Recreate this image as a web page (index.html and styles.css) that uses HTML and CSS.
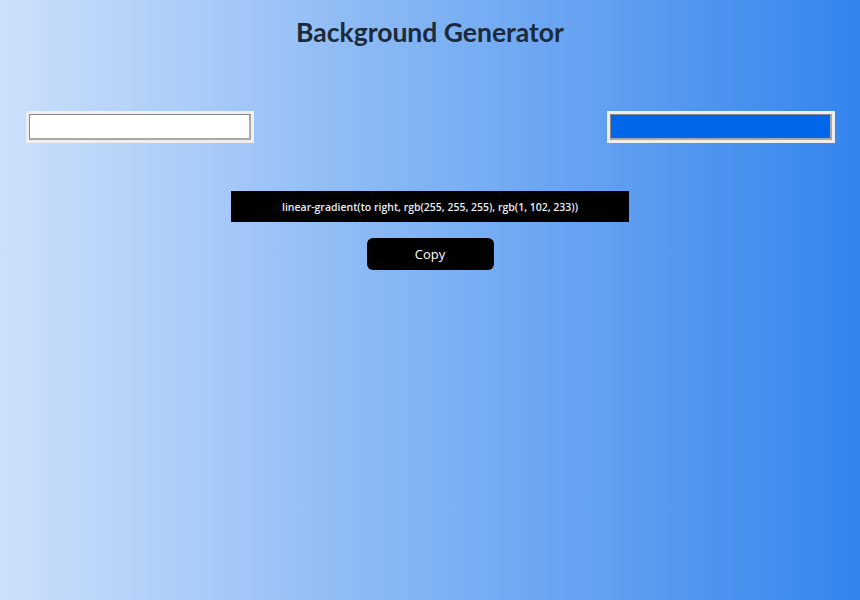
FILE: index.html
```html
<!DOCTYPE html>
<html>
<head>
<meta charset="utf-8">
<link rel="stylesheet" href="styles.css">
</head>
<body>
<h1 class="title">Background Generator</h1>
<div class="pickers">
  <input class="color" type="color" value="#ffffff">
  <input class="color" type="color" value="#0166e9">
</div>
<div class="output">linear-gradient(to right, rgb(255, 255, 255), rgb(1, 102, 233))</div>
<div class="actions"><button class="copy">Copy</button></div>
</body>
</html>
```
FILE: styles.css
```css
html {
  height: 100%;
}
body {
  margin: 0;
  min-height: 100%;
  background: linear-gradient(to right, #ffffff -33%, rgb(1, 102, 233) 133%);
  font-family: "Open Sans", "DejaVu Sans", sans-serif;
  display: flex;
  flex-direction: column;
  align-items: center;
}
.title {
  margin: 16px 0 0;
  font-family: Lato, "Open Sans", sans-serif;
  font-size: 26.5px;
  font-weight: 700;
  color: #1c2a3a;
  line-height: 32px;
}
.pickers {
  align-self: stretch;
  display: flex;
  justify-content: space-between;
  padding: 63px 25px 0 26px;
}
.color {
  -webkit-appearance: none;
  appearance: none;
  box-sizing: border-box;
  width: 228px;
  height: 32px;
  margin: 0;
  padding: 0;
  border: 3px solid #eeeeee;
  border-radius: 0;
  background: #eeeeee;
}
.color::-webkit-color-swatch-wrapper {
  padding: 0;
}
.color::-webkit-color-swatch {
  border: 1px solid #888888;
  border-right: 2px solid #a8a8a8;
  border-bottom: 2px solid #a8a8a8;
  border-radius: 0;
}
.output {
  margin-top: 48px;
  width: 398px;
  height: 31px;
  background: #000;
  color: #e8eef8;
  font-size: 10.5px;
  font-weight: 600;
  display: flex;
  align-items: center;
  justify-content: center;
}
.actions {
  margin-top: 16px;
}
.copy {
  width: 127px;
  height: 32px;
  background: #000;
  color: #fff;
  border: none;
  border-radius: 6px;
  font-family: inherit;
  font-size: 13px;
}
```
